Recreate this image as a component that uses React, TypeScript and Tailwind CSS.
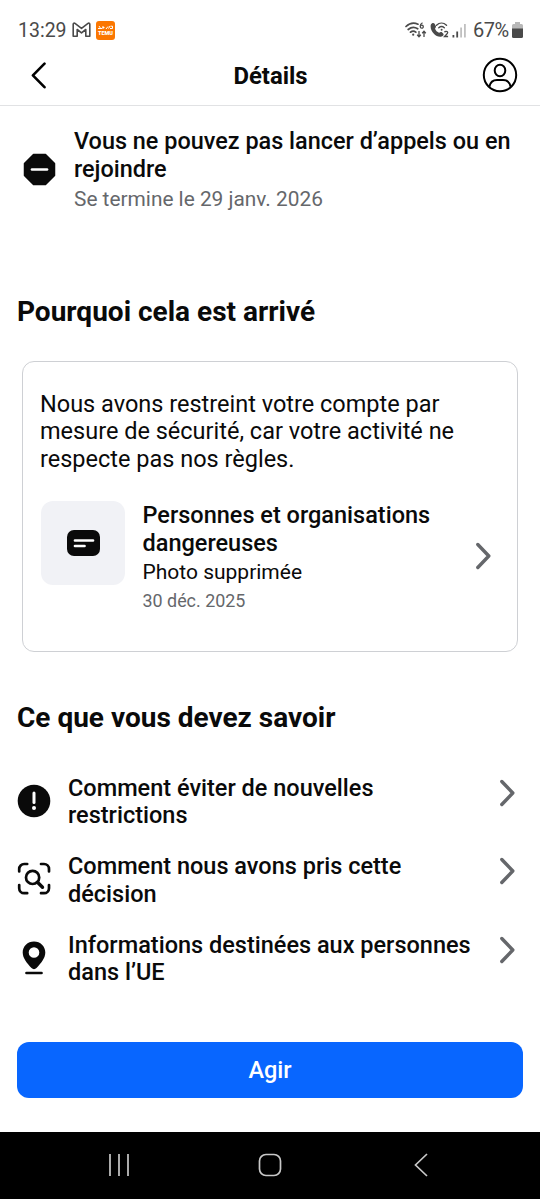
import type { ReactNode } from 'react'

type InfoRowProps = {
  icon: ReactNode
  lines: string[]
}

const INFO_ROWS: InfoRowProps[] = [
  {
    icon: <AlertIcon />,
    lines: ['Comment éviter de nouvelles', 'restrictions'],
  },
  {
    icon: <ScanSearchIcon />,
    lines: ['Comment nous avons pris cette', 'décision'],
  },
  {
    icon: <PinIcon />,
    lines: ['Informations destinées aux personnes', 'dans l’UE'],
  },
]

function AlertIcon() {
  return (
    <svg className="h-8.5 w-8.5" viewBox="0 0 34 34" fill="none">
      <circle cx="17" cy="17" r="16.3" fill="#0a0a0a" />
      <path d="M17 9v9.5" stroke="#fff" strokeWidth="3" strokeLinecap="round" />
      <circle cx="17" cy="24" r="2" fill="#fff" />
    </svg>
  )
}

function ScanSearchIcon() {
  return (
    <svg
      className="h-8.5 w-8.5"
      viewBox="0 0 34 34"
      fill="none"
      stroke="#0a0a0a"
      strokeWidth="2.7"
      strokeLinecap="round"
    >
      <path d="M2.2 9.5V7a5 5 0 0 1 5-5h3M24 2h3a5 5 0 0 1 5 5v2.5M32 23v3.2a5 5 0 0 1-5 5h-3M10.2 31.2h-3a5 5 0 0 1-5-5V23" />
      <circle cx="15.6" cy="15.4" r="6.6" />
      <path d="M20.5 20.3l5 5" strokeWidth="3.4" />
    </svg>
  )
}

function PinIcon() {
  return (
    <svg className="h-8.5 w-8.5" viewBox="0 0 34 34" fill="none">
      <path
        fillRule="evenodd"
        fill="#0a0a0a"
        d="M17 .6C10.6.6 5.7 5.5 5.7 11.6c0 5.7 4.2 10.6 8.8 15.5 1.4 1.5 3.6 1.5 5 0 4.6-4.9 8.8-9.8 8.8-15.5C28.3 5.5 23.4.6 17 .6Zm0 5.6a5.3 5.3 0 1 1 0 10.6 5.3 5.3 0 0 1 0-10.6Z"
      />
      <path d="M9.5 32h15" stroke="#0a0a0a" strokeWidth="2.7" strokeLinecap="round" />
    </svg>
  )
}

function ChevronRight() {
  return (
    <svg className="h-7 w-4 shrink-0" viewBox="0 0 16 28" fill="none">
      <path
        d="M1.8 2.5L12.8 14 1.8 25.5"
        stroke="#65676b"
        strokeWidth="3.4"
        strokeLinecap="round"
        strokeLinejoin="round"
      />
    </svg>
  )
}

function StatusBar() {
  return (
    <div className="flex h-[50px] items-center pt-2.5 pr-[17px] pl-[18px] text-[#4a4a4a]">
      <span className="w-[49px] pt-px text-[19.5px] whitespace-nowrap">13:29</span>
      {/* Gmail */}
      <svg className="ml-[5px] h-4 w-[19px]" viewBox="0 0 19 16" fill="none">
        <path
          d="M1.2 14.2V2.2c0-1 1-1.4 1.8-.8l6.500 5 6.500-5c.8-.6 1.800-.2 1.800.8v12h-4V7.500l-4.300 3.400-4.300-3.400v6.700Z"
          stroke="currentColor"
          strokeWidth="1.6"
          strokeLinejoin="round"
        />
      </svg>
      {/* Temu */}
      <div className="ml-[5px] flex h-[19px] w-[19px] flex-col items-center justify-center rounded-[3px] bg-[#fb7701] text-white">
        <svg className="h-[5px] w-[15px]" viewBox="0 0 15 5" fill="none" stroke="currentColor">
          <path d="M0 3.5h4M1 1l2 3M5 1v3M4.5 2.5h2M8 4l2-2.5M10.5 3.5L12 1M12 3.5h2.5V1.2h-2" />
        </svg>
        <span className="text-[5.5px] leading-[6px] font-black">TEMU</span>
      </div>
      {/* Wi-Fi 6 */}
      <svg className="ml-auto h-4 w-[22px]" viewBox="0 0 22 16" fill="none" stroke="currentColor">
        <path
          d="M1 4.5C4.5 1.2 9 .5 13 2.200M3.200 7.500c3-2.600 6.500-2.800 9.500-.7M5.500 10.200c1.800-1.300 3.700-1.300 5.300 0"
          strokeWidth="1.7"
          strokeLinecap="round"
        />
        <circle cx="8.2" cy="12.7" r="1.1" fill="currentColor" stroke="none" />
        <path d="M17.5.8c-1.5.8-2.3 2-2.3 3.5" strokeWidth="1.3" />
        <circle cx="16.8" cy="4.7" r="1.5" strokeWidth="1.3" />
        <path d="M14 9v5.5M12.2 12.8L14 14.7l1.8-1.9M19 15V9.5M17.2 11.2L19 9.3l1.8 1.9" strokeWidth="1.3" />
      </svg>
      {/* Wi-Fi calling */}
      <svg className="ml-[3px] h-4 w-[19px]" viewBox="0 0 19 16" fill="none">
        <path
          d="M.8 2.8C1.500 1 3.800.4 4.600 1.800l1.300 2.400c.5 1-.8 1.800-.8 2.500.5 1.700 2.200 3.300 3.900 4.100.8.200 1.900-1.200 2.900-.5l1.500 1.500c.6.900-.4 2.500-1.800 2.800C6.300 16-.6 8.800.8 2.800Z"
          fill="currentColor"
        />
        <path
          d="M6.5 3.2c3-2.8 7-2.8 10 0M8.800 5.8c1.700-1.500 3.800-1.500 5.500 0"
          stroke="currentColor"
          strokeWidth="1.4"
          strokeLinecap="round"
        />
        <circle cx="11.6" cy="7.8" r="1" fill="currentColor" />
        <path
          d="M14.5 10.2c.5-1.300 3.200-1.200 3.200.4 0 1.200-2 2.400-3.200 3.900h3.600"
          stroke="currentColor"
          strokeWidth="1.3"
        />
      </svg>
      <svg className="ml-[3px] h-[15px] w-[15px]" viewBox="0 0 15 15" fill="currentColor">
        <path d="M.5 12h1.8v2.500H.5zM4.300 8.500h1.800v6H4.300z" />
        <path d="M8.200 4.500H10v10H8.200zM12 1h1.800v13.500H12z" opacity=".35" />
      </svg>
      <span className="ml-1.5 w-[38px] pt-px text-[20px] tracking-[-0.5px] whitespace-nowrap">67%</span>
      <svg className="ml-px h-4 w-[11px]" viewBox="0 0 11 16">
        <path d="M3 0h5v2h1.5Q11 2 11 3.500V7H0V3.500Q0 2 1.500 2H3Z" fill="#b8b8b8" />
        <path d="M0 6.5h11v8q0 1.500-1.500 1.500h-8Q0 16 0 14.500Z" fill="#4a4a4a" />
      </svg>
    </div>
  )
}

function Header() {
  return (
    <header className="grid h-14 grid-cols-3 items-center border-b border-[#e1e2e4] pr-[22px] pb-1 pl-[31px]">
      <svg className="h-[27px] w-4" viewBox="0 0 16 27" fill="none">
        <path
          d="M13.5 1.7L1.9 13.3 13.5 25.2"
          stroke="#000"
          strokeWidth="2.6"
          strokeLinecap="round"
          strokeLinejoin="round"
        />
      </svg>
      <h1 className="pt-0.5 pr-2 text-center text-[23.9px] font-bold">Détails</h1>
      <svg className="-mt-px h-9 w-9 justify-self-end" viewBox="0 0 36 36" fill="none" stroke="#000" strokeWidth="2">
        <circle cx="18" cy="18" r="16.2" />
        <ellipse cx="18" cy="13.5" rx="5.3" ry="5.8" />
        <path d="M7.3 29.8c1-4.400 4.200-6.700 7.700-6.700h6c3.500 0 6.700 2.300 7.700 6.700" />
      </svg>
    </header>
  )
}

function InfoRow({ icon, lines }: InfoRowProps) {
  return (
    <div className="flex h-[78.5px] items-start">
      <div className="mt-[9px] w-[51px]">{icon}</div>
      <p className="flex-1 font-medium">
        {lines.map((line) => (
          <span key={line} className="block whitespace-nowrap">
            {line}
          </span>
        ))}
      </p>
      <div className="mt-1">
        <ChevronRight />
      </div>
    </div>
  )
}

export default function App() {
  return (
    <div className="flex h-[1199px] w-[540px] flex-col overflow-hidden bg-white font-[Roboto,sans-serif] text-[23.5px] leading-[27.5px] text-[#0a0a0a]">
      <StatusBar />
      <Header />

      <main className="flex flex-1 flex-col">
        {/* Active restriction */}
        <section className="mt-[22px] flex items-start pl-[23px]">
          <svg className="mt-[25px] mr-[18px] h-[33px] w-[33px]" viewBox="0 0 33 33">
            <path
              d="M10.5 1.5h12l9 9v12l-9 9h-12l-9-9v-12Z"
              fill="#0a0a0a"
              stroke="#0a0a0a"
              strokeWidth="1.5"
              strokeLinejoin="round"
            />
            <path d="M9 16.5h15" stroke="#fff" strokeWidth="2.7" strokeLinecap="round" />
          </svg>
          <div className="whitespace-nowrap">
            <p className="text-[23.45px] font-medium">
              Vous ne pouvez pas lancer d’appels ou en
              <br />
              rejoindre
            </p>
            <p className="mt-[3px] text-[20.85px] text-[#65676b]">Se termine le 29 janv. 2026</p>
          </div>
        </section>

        <h2 className="mt-[82px] pl-[17px] text-[28px] leading-8 font-bold">Pourquoi cela est arrivé</h2>

        <section className="mx-[22px] mt-[33px] h-[291px] rounded-xl border-[1.5px] border-[#ced0d4] pt-[29px] pl-[17px]">
          <p className="whitespace-nowrap">
            Nous avons restreint votre compte par
            <br />
            mesure de sécurité, car votre activité ne
            <br />
            respecte pas nos règles.
          </p>
          <div className="mt-7 flex items-start">
            <div className="ml-px flex h-21 w-21 items-center justify-center rounded-xl bg-[#f1f2f6]">
              <svg className="h-[26px] w-[33px]" viewBox="0 0 33 26" fill="none">
                <rect width="33" height="26" rx="7" fill="#0a0a0a" />
                <path d="M8 10.5h18M8 16h9.5" stroke="#fff" strokeWidth="2.7" strokeLinecap="round" />
              </svg>
            </div>
            <div className="ml-[17.5px] w-[333.5px] pt-px whitespace-nowrap">
              <p className="font-medium">
                Personnes et organisations
                <br />
                dangereuses
              </p>
              <p className="mt-0.5 text-[21px]">Photo supprimée</p>
              <p className="mt-0.5 text-[17.9px] leading-6 text-[#65676b]">30 déc. 2025</p>
            </div>
            <div className="mt-[41px]">
              <ChevronRight />
            </div>
          </div>
        </section>

        <h2 className="mt-[50px] pl-[17px] text-[28px] leading-8 font-bold">Ce que vous devez savoir</h2>

        <section className="mt-[41px] pr-6 pl-[17px]">
          {INFO_ROWS.map((row) => (
            <InfoRow key={row.lines[0]} {...row} />
          ))}
        </section>

        <button className="mx-[17px] mt-8 h-14 rounded-xl bg-[#0866ff] pt-0.5 font-medium text-white">Agir</button>
      </main>

      {/* System navigation */}
      <nav className="grid h-[67.5px] grid-cols-3 items-center bg-black px-[43px] text-[#c8c8c8]">
        <svg className="h-6 w-6 justify-self-center" viewBox="0 0 24 24" stroke="currentColor" strokeWidth="1.7">
          <path d="M3 1v22M12 1v22M21 1v22" />
        </svg>
        <svg className="h-6 w-6 justify-self-center" viewBox="0 0 24 24" fill="none" stroke="currentColor" strokeWidth="1.7">
          <rect x="1.5" y="1.5" width="21" height="21" rx="6.5" />
        </svg>
        <svg className="h-6 w-6 justify-self-center" viewBox="0 0 24 24" fill="none" stroke="currentColor" strokeWidth="1.7">
          <path d="M18 1L6.5 12 18 23" />
        </svg>
      </nav>
    </div>
  )
}
